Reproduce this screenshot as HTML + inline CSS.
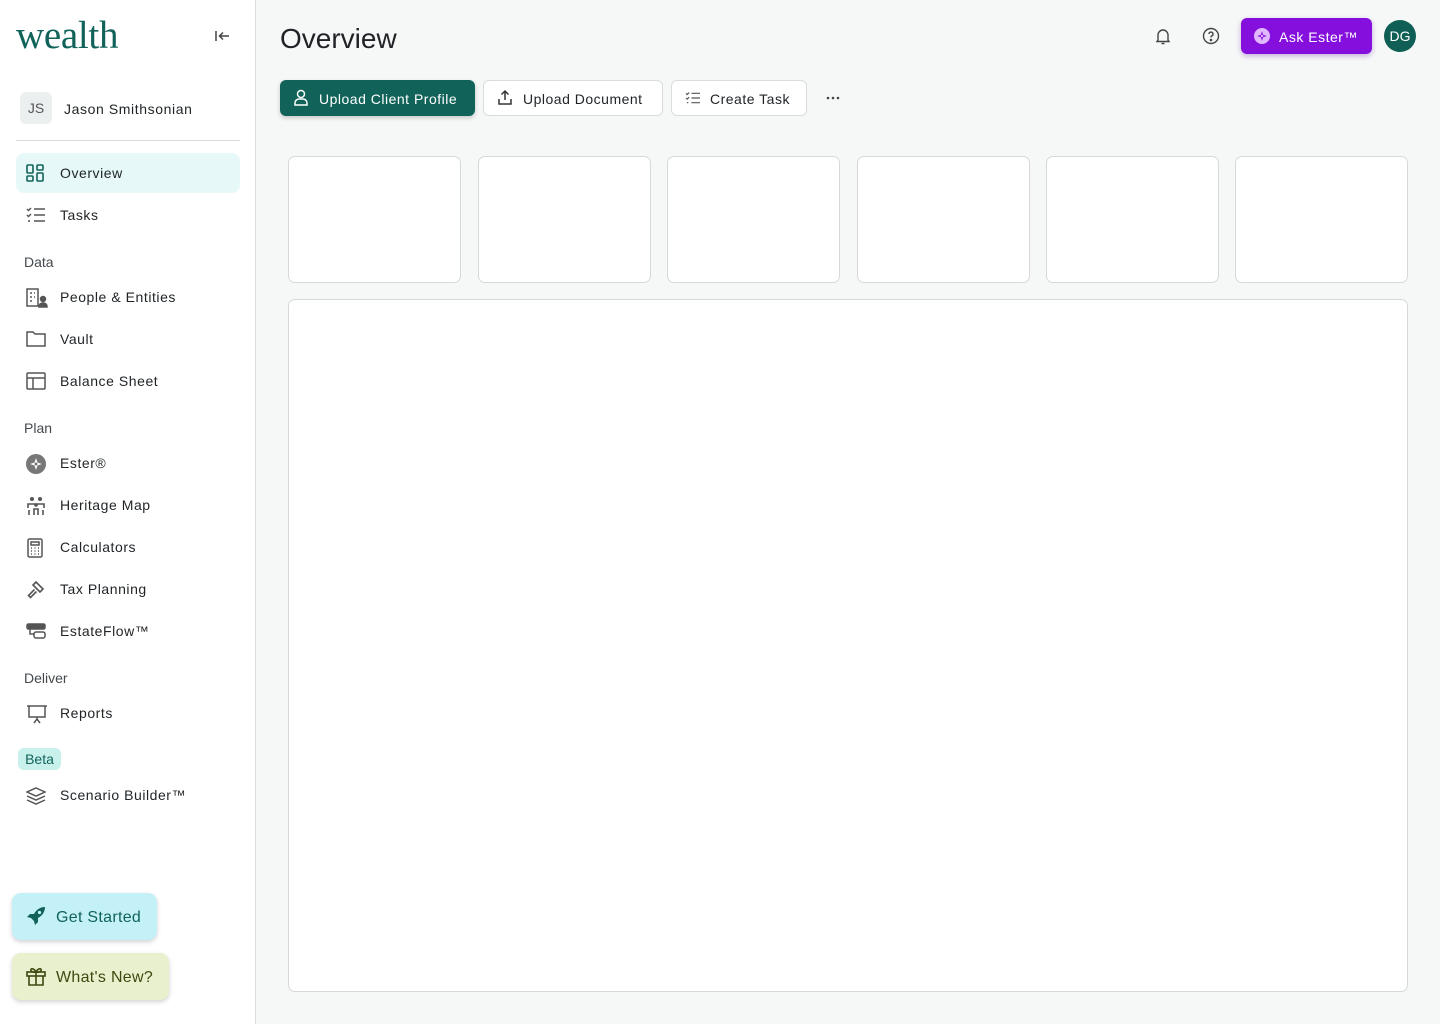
<!DOCTYPE html>
<html><head><meta charset="utf-8"><style>
*{box-sizing:border-box;margin:0;padding:0}
body{width:1440px;height:1024px;font-family:"Liberation Sans",sans-serif;background:#f6f8f8;position:relative;overflow:hidden;color:#1f2326}
.side{position:absolute;left:0;top:0;width:256px;height:1024px;background:#fff;border-right:1px solid #d9dcde}
.logo{position:absolute;left:16px;top:13px;font-family:"Liberation Serif",serif;font-size:39px;color:#11635a;letter-spacing:-0.3px}
.abs{position:absolute}
.item{position:absolute;left:16px;width:224px;height:40px;display:flex;align-items:center;font-size:14px;letter-spacing:0.55px;color:#1f2326}
.item svg{position:absolute;left:10px;top:11px}
.item span{position:absolute;left:44px;top:12px}
.sec{position:absolute;left:24px;font-size:14px;color:#44494d}
.btn{position:absolute;top:80px;height:36px;border-radius:6px;font-size:14px;letter-spacing:0.5px;display:flex;align-items:center;border:1px solid #d9dcde;background:#fff}
.card{position:absolute;top:156px;width:173px;height:127px;background:#fff;border:1px solid #d6d9dc;border-radius:7px}
</style></head><body>
<div class="side">
<div class="logo">wealth</div>
<svg class="abs" style="left:214px;top:29px" width="16" height="14" viewBox="0 0 16 14" fill="none" stroke="#444" stroke-width="1.5"><path d="M2 2v10M15 7H6M9 3.5L5.5 7 9 10.5"/></svg>
<div class="abs" style="left:20px;top:92px;width:32px;height:32px;border-radius:6px;background:#eceff0;font-size:14px;color:#555;display:flex;align-items:center;justify-content:center">JS</div>
<div class="abs" style="left:64px;top:101px;font-size:14px;letter-spacing:0.6px">Jason Smithsonian</div>
<div class="abs" style="left:16px;top:140px;width:224px;height:1px;background:#d9dcde"></div>
<div class="item" style="top:153px;background:#e6f8f8;border-radius:8px"><svg width="18" height="18" viewBox="0 0 18 18" fill="none" stroke="#11635a" stroke-width="1.6"><rect x="1" y="1" width="6" height="8" rx="1"/><rect x="11" y="1" width="6" height="5" rx="1"/><rect x="1" y="12" width="6" height="5" rx="1"/><rect x="11" y="9" width="6" height="8" rx="1"/></svg><span>Overview</span></div>
<div class="item" style="top:195px"><svg width="20" height="18" viewBox="0 0 20 18" fill="none" stroke="#555" stroke-width="1.5"><path d="M1 3l1.5 1.5L5 2M1 9l1.5 1.5L5 8M8 3h11M8 9h11M8 15h11M2 15h2"/></svg><span>Tasks</span></div>
<div class="sec" style="top:254px">Data</div>
<div class="item" style="top:277px"><svg width="22" height="20" viewBox="0 0 22 20" fill="none" stroke="#555" stroke-width="1.5"><rect x="1" y="1" width="11" height="17"/><path d="M4 5h2M8 5h1M4 9h2M8 9h1M4 13h2"/><circle cx="17" cy="11" r="2.5" fill="#555"/><path d="M13 19c0-3 2-4 4-4s4 1 4 4z" fill="#555"/></svg><span>People &amp; Entities</span></div>
<div class="item" style="top:319px"><svg width="20" height="18" viewBox="0 0 20 18" fill="none" stroke="#555" stroke-width="1.5"><path d="M1 2h6l2 2h10v12H1z"/></svg><span>Vault</span></div>
<div class="item" style="top:361px"><svg width="20" height="18" viewBox="0 0 20 18" fill="none" stroke="#555" stroke-width="1.5"><rect x="1" y="1" width="18" height="16" rx="1"/><path d="M1 6h18M7 6v11"/></svg><span>Balance Sheet</span></div>
<div class="sec" style="top:420px">Plan</div>
<div class="item" style="top:443px"><svg width="20" height="20" viewBox="0 0 20 20"><circle cx="10" cy="10" r="10" fill="#777"/><path d="M10 4l2 6-2 6-2-6z M4 10l6-2 6 2-6 2z" fill="#fff"/><circle cx="10" cy="10" r="1.5" fill="#777"/></svg><span>Ester®</span></div>
<div class="item" style="top:485px"><svg width="20" height="20" viewBox="0 0 20 20" fill="#555"><circle cx="6" cy="3" r="2"/><circle cx="14" cy="3" r="2"/><circle cx="10" cy="9" r="1.8"/><path d="M2 12v-4h8M18 12v-4h-8M8 19v-6h4v6M3 19v-5M17 19v-5" stroke="#555" stroke-width="1.6" fill="none"/></svg><span>Heritage Map</span></div>
<div class="item" style="top:527px"><svg width="18" height="20" viewBox="0 0 18 20" fill="none" stroke="#555" stroke-width="1.5"><rect x="2" y="1" width="14" height="18" rx="1.5"/><rect x="5" y="4" width="8" height="3"/><path d="M5 10h1M8.5 10h1M12 10h1M5 13h1M8.5 13h1M12 13h1M5 16h1M8.5 16h1M12 16h1"/></svg><span>Calculators</span></div>
<div class="item" style="top:569px"><svg width="20" height="20" viewBox="0 0 20 20" fill="none" stroke="#555" stroke-width="1.6"><path d="M10 2l7 7-3 3-7-7zM8.5 9.5l-6 6 2 2 6-6"/></svg><span>Tax Planning</span></div>
<div class="item" style="top:611px"><svg width="22" height="20" viewBox="0 0 22 20" fill="none" stroke="#555" stroke-width="1.5"><rect x="1" y="2" width="18" height="5" rx="1.5" fill="#555"/><path d="M4 7v5h4"/><rect x="8" y="10" width="11" height="6" rx="2"/></svg><span>EstateFlow™</span></div>
<div class="sec" style="top:670px">Deliver</div>
<div class="item" style="top:693px"><svg width="22" height="20" viewBox="0 0 22 20" fill="none" stroke="#555" stroke-width="1.5"><path d="M1 2h20M3 2v11h16V2M11 13v2M8 19l3-4 3 4"/></svg><span>Reports</span></div>
<div class="abs" style="left:18px;top:748px;width:43px;height:22px;background:#c8f1ec;border-radius:6px;font-size:14px;color:#11635a;display:flex;align-items:center;justify-content:center">Beta</div>
<div class="item" style="top:775px"><svg width="20" height="20" viewBox="0 0 20 20" fill="none" stroke="#555" stroke-width="1.5"><path d="M10 2l9 4-9 4-9-4z M1 10l9 4 9-4 M1 14l9 4 9-4"/></svg><span>Scenario Builder™</span></div>
<div class="abs" style="left:12px;top:893px;width:145px;height:47px;background:#c4f1f8;border-radius:9px;box-shadow:0 2px 5px rgba(0,0,0,.18);font-size:16px;color:#11635a;letter-spacing:0.3px;display:flex;align-items:center;padding-left:44px;padding-top:2px">Get Started</div>
<svg class="abs" style="left:26px;top:906px" width="20" height="20" viewBox="0 0 20 20" fill="#11635a"><path d="M19 1c-5 0-9 3-11 7L4 8 1 11l4 1 3 3 1 4 3-3v-4c4-2 7-6 7-11z"/><circle cx="13.5" cy="6.5" r="1.6" fill="#c4f1f8"/></svg>
<div class="abs" style="left:12px;top:953px;width:157px;height:47px;background:#e8f0cd;border-radius:9px;box-shadow:0 2px 5px rgba(0,0,0,.18);font-size:16px;color:#3d4a10;letter-spacing:0.3px;display:flex;align-items:center;padding-left:44px;padding-top:2px">What's New?</div>
<svg class="abs" style="left:26px;top:966px" width="20" height="20" viewBox="0 0 20 20" fill="none" stroke="#3d4a10" stroke-width="1.6"><rect x="1" y="6" width="18" height="4"/><path d="M3 10v9h14v-9M10 6v13M10 6C8 2 4 2 5 4.5S10 6 10 6c2-4 6-4 5-1.5S10 6 10 6"/></svg>
</div>

<div class="abs" style="left:280px;top:23px;font-size:28px;color:#1f2326">Overview</div>
<svg class="abs" style="left:1155px;top:28px" width="16" height="17" viewBox="0 0 16 17" fill="none" stroke="#444" stroke-width="1.4"><path d="M3 12V7a5 5 0 0 1 10 0v5l1 1.5H2zM6.5 15.5h3"/></svg>
<svg class="abs" style="left:1202px;top:27px" width="18" height="18" viewBox="0 0 18 18" fill="none" stroke="#444" stroke-width="1.4"><circle cx="9" cy="9" r="7.5"/><path d="M7 7a2 2 0 1 1 2.5 2c-.5.2-.5.7-.5 1.5"/><circle cx="9" cy="13" r=".6" fill="#444"/></svg>
<div class="abs" style="left:1241px;top:18px;width:131px;height:36px;background:#8510dd;border-radius:6px;box-shadow:0 2px 6px rgba(80,0,150,.3);color:#fff;font-size:14px;letter-spacing:0.5px;display:flex;align-items:center;padding-left:38px;padding-top:2px">Ask Ester™</div>
<svg class="abs" style="left:1254px;top:28px" width="16" height="16" viewBox="0 0 20 20"><circle cx="10" cy="10" r="10" fill="#e1b8ff"/><path d="M10 4l2 6-2 6-2-6z M4 10l6-2 6 2-6 2z" fill="#8510dd"/><circle cx="10" cy="10" r="1.5" fill="#e1b8ff"/></svg>
<div class="abs" style="left:1384px;top:20px;width:32px;height:32px;border-radius:50%;background:#0f5f56;color:#fff;font-size:14px;display:flex;align-items:center;justify-content:center">DG</div>

<div class="btn" style="left:280px;width:195px;background:#11635a;border-color:#11635a;color:#fff;box-shadow:0 2px 5px rgba(0,0,0,.2);padding-left:38px;padding-top:2px">Upload Client Profile</div>
<svg class="abs" style="left:293px;top:89px" width="16" height="17" viewBox="0 0 16 17" fill="none" stroke="#fff" stroke-width="1.5"><circle cx="8" cy="5" r="3.5"/><path d="M2 16v-2a4 4 0 0 1 4-4h4a4 4 0 0 1 4 4v2z"/></svg>
<div class="btn" style="left:483px;width:180px;padding-left:39px;padding-top:2px">Upload Document</div>
<svg class="abs" style="left:497px;top:89px" width="16" height="17" viewBox="0 0 16 17" fill="none" stroke="#333" stroke-width="1.5"><path d="M8 11V2M4.5 5.5L8 2l3.5 3.5M2 10v5h12v-5"/></svg>
<div class="btn" style="left:671px;width:136px;padding-left:38px;padding-top:2px">Create Task</div>
<svg class="abs" style="left:685px;top:91px" width="16" height="14" viewBox="0 0 20 18" fill="none" stroke="#555" stroke-width="1.5"><path d="M1 3l1.5 1.5L5 2M1 9l1.5 1.5L5 8M8 3h11M8 9h11M8 15h11M2 15h2"/></svg>
<svg class="abs" style="left:826px;top:96px" width="14" height="4" viewBox="0 0 14 4" fill="#444"><circle cx="2" cy="2" r="1.3"/><circle cx="7" cy="2" r="1.3"/><circle cx="12" cy="2" r="1.3"/></svg>

<div class="card" style="left:288px"></div>
<div class="card" style="left:478px"></div>
<div class="card" style="left:667px"></div>
<div class="card" style="left:857px"></div>
<div class="card" style="left:1046px"></div>
<div class="card" style="left:1235px"></div>
<div class="abs" style="left:288px;top:299px;width:1120px;height:693px;background:#fff;border:1px solid #d6d9dc;border-radius:7px"></div>
</body></html>
